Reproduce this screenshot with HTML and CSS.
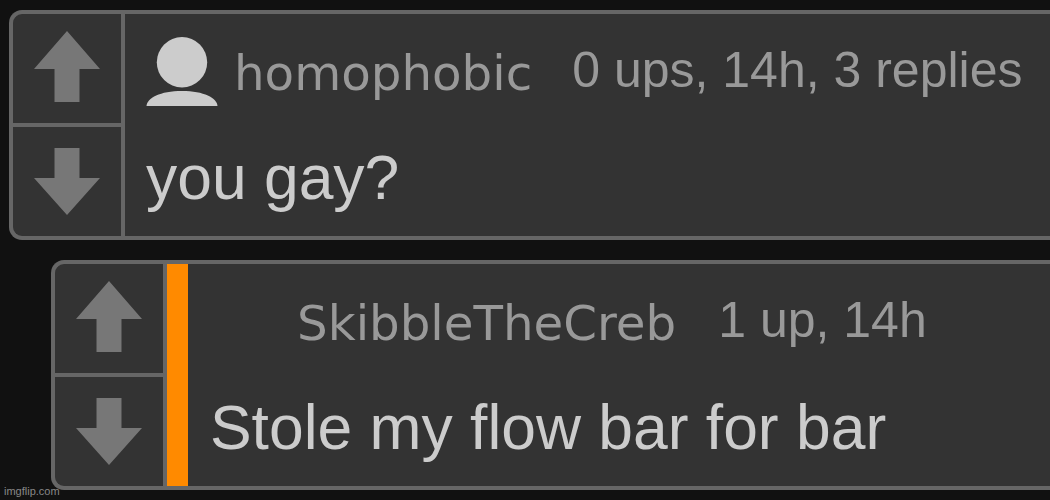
FILE: index.html
```html
<!DOCTYPE html>
<html lang="en">
<head>
    <meta charset="UTF-8">
    <meta name="viewport" content="width=device-width, initial-scale=1.0">
    <title>Comments</title>
    <link rel="stylesheet" href="styles.css">
</head>
<body>
    <div class="comments">
        <div class="comment">
            <div class="votes">
                <div class="vote">
                    <svg class="arrow" viewBox="0 0 66 71"><path d="M33 0L66 38H45.500V71H20.500V38H0Z"/></svg>
                </div>
                <div class="vote down">
                    <svg class="arrow" viewBox="0 0 66 67"><path d="M33 67L66 30H45.500V0H20.500V30H0Z"/></svg>
                </div>
            </div>
            <div class="content">
                <div class="header">
                    <svg class="avatar" viewBox="0 0 72 69">
                        <circle cx="36" cy="25.300" r="25.200"/>
                        <path d="M.5 69C1 61 14 54 36 54S71 61 71.500 69Z"/>
                    </svg>
                    <span class="user">homophobic</span>
                    <span class="meta">0 ups, 14h, 3 replies</span>
                </div>
                <div class="text">you gay?</div>
            </div>
        </div>
        <div class="comment reply">
            <div class="votes">
                <div class="vote">
                    <svg class="arrow" viewBox="0 0 66 71"><path d="M33 0L66 38H45.500V71H20.500V38H0Z"/></svg>
                </div>
                <div class="vote down">
                    <svg class="arrow" viewBox="0 0 66 67"><path d="M33 67L66 30H45.500V0H20.500V30H0Z"/></svg>
                </div>
            </div>
            <div class="content">
                <div class="header">
                    <div class="avatar"></div>
                    <span class="user">SkibbleTheCreb</span>
                    <span class="meta">1 up, 14h</span>
                </div>
                <div class="text">Stole my flow bar for bar</div>
            </div>
        </div>
    </div>
    <div class="watermark">imgflip.com</div>
</body>
</html>
```
FILE: styles.css
```css
* {
    box-sizing: border-box;
}
body {
    margin: 0;
    height: 500px;
    overflow: hidden;
    background: #111;
    font-family: "Liberation Sans", Arial, sans-serif;
}
.comments {
    display: flex;
    flex-direction: column;
    gap: 20px;
    padding: 10px 0 0 9px;
}
.comment {
    display: flex;
    height: 230px;
    background: #333;
    border: 4px solid #666;
    border-right: none;
    border-radius: 13px 0 0 13px;
}
.reply {
    margin-left: 42px;
}
.votes {
    display: flex;
    flex-direction: column;
    flex: none;
    width: 112px;
    border-right: 4px solid #666;
}
.vote {
    display: flex;
    justify-content: center;
    flex: none;
    height: 113px;
    padding-top: 17px;
    border-bottom: 4px solid #666;
}
.down {
    height: 109px;
    padding-top: 21px;
    border-bottom: none;
}
.arrow {
    width: 66px;
    height: 71px;
    fill: #777;
}
.down .arrow {
    height: 67px;
}
.content {
    flex: 1;
    min-width: 0;
    padding: 23px 0 0 21px;
    white-space: nowrap;
}
.reply .content {
    border-left: 21px solid #ff8a00;
    padding-left: 22px;
}
.header {
    display: flex;
    height: 70px;
    line-height: 60px;
    color: #999;
}
.avatar {
    flex: none;
    width: 72px;
    height: 69px;
    margin-right: 16px;
    fill: #ccc;
}
.reply .avatar {
    margin-right: 15px;
}
.user {
    padding-top: 6px;
    margin-right: 40px;
    font-family: "DejaVu Sans", Verdana, sans-serif;
    font-size: 48.3px;
}
.meta {
    padding-top: 3px;
    font-size: 50px;
}
.reply .meta {
    margin-left: 2px;
}
.text {
    margin-top: 36px;
    font-size: 62.4px;
    line-height: 70px;
    color: #ccc;
}
.watermark {
    position: absolute;
    left: 4px;
    bottom: 2px;
    font-size: 11px;
    line-height: 13px;
    color: #888;
}
```
